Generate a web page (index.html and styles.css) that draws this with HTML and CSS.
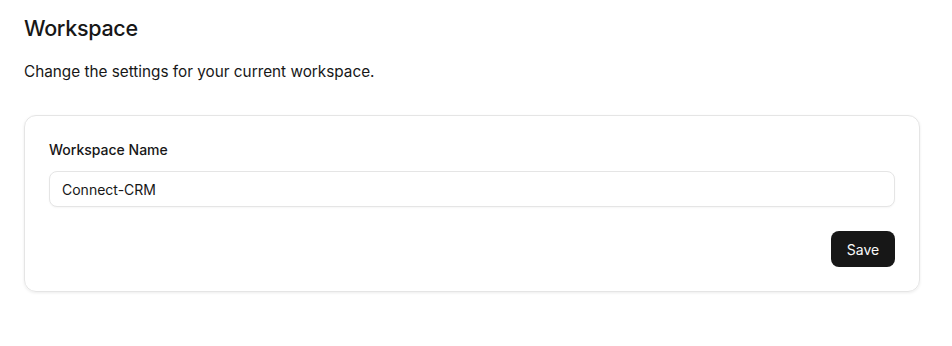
FILE: index.html
```html
<!DOCTYPE html>
<html lang="en">
<head>
  <meta charset="UTF-8">
  <title>Workspace Settings</title>
  <link rel="stylesheet" href="styles.css">
</head>
<body>

<div class="page">
  <h1>Workspace</h1>
  <p class="subtitle">Change the settings for your current workspace.</p>

  <form class="card" id="workspaceForm">
    <label for="workspaceName">Workspace Name</label>
    <input type="text" id="workspaceName" name="workspaceName" value="Connect-CRM">
    <div class="actions">
      <button type="submit">Save</button>
    </div>
  </form>
</div>

</body>
</html>
```

FILE: styles.css
```css
body { margin: 0; font-family: Inter, "Noto Sans", sans-serif; color: #171717; background: #fff; }
.page { padding: 14px 32px 24px 24px; }
h1 { font-size: 21.5px; line-height: 28px; font-weight: 500; margin: 0; letter-spacing: -0.3px; }
.subtitle { font-size: 15.3px; line-height: 24px; margin: 18px 0 0; }
.card { margin-top: 31px; border: 1px solid #e5e5e5; border-radius: 12px; padding: 24px; box-shadow: 0 1px 3px rgba(0,0,0,0.08); display: flex; flex-direction: column; }
label { font-size: 14px; line-height: 19px; font-weight: 500; }
input { margin-top: 12px; height: 36px; box-sizing: border-box; border: 1px solid #e5e5e5; border-radius: 8px; padding: 0 12px; font: inherit; font-size: 14px; color: #171717; box-shadow: 0 1px 2px rgba(0,0,0,0.04); }
.actions { display: flex; justify-content: flex-end; margin-top: 24px; }
button { height: 36px; width: 64px; padding: 0; background: #171717; color: #fafafa; border: none; border-radius: 8px; font: inherit; font-size: 14px; font-weight: 400; }
```
